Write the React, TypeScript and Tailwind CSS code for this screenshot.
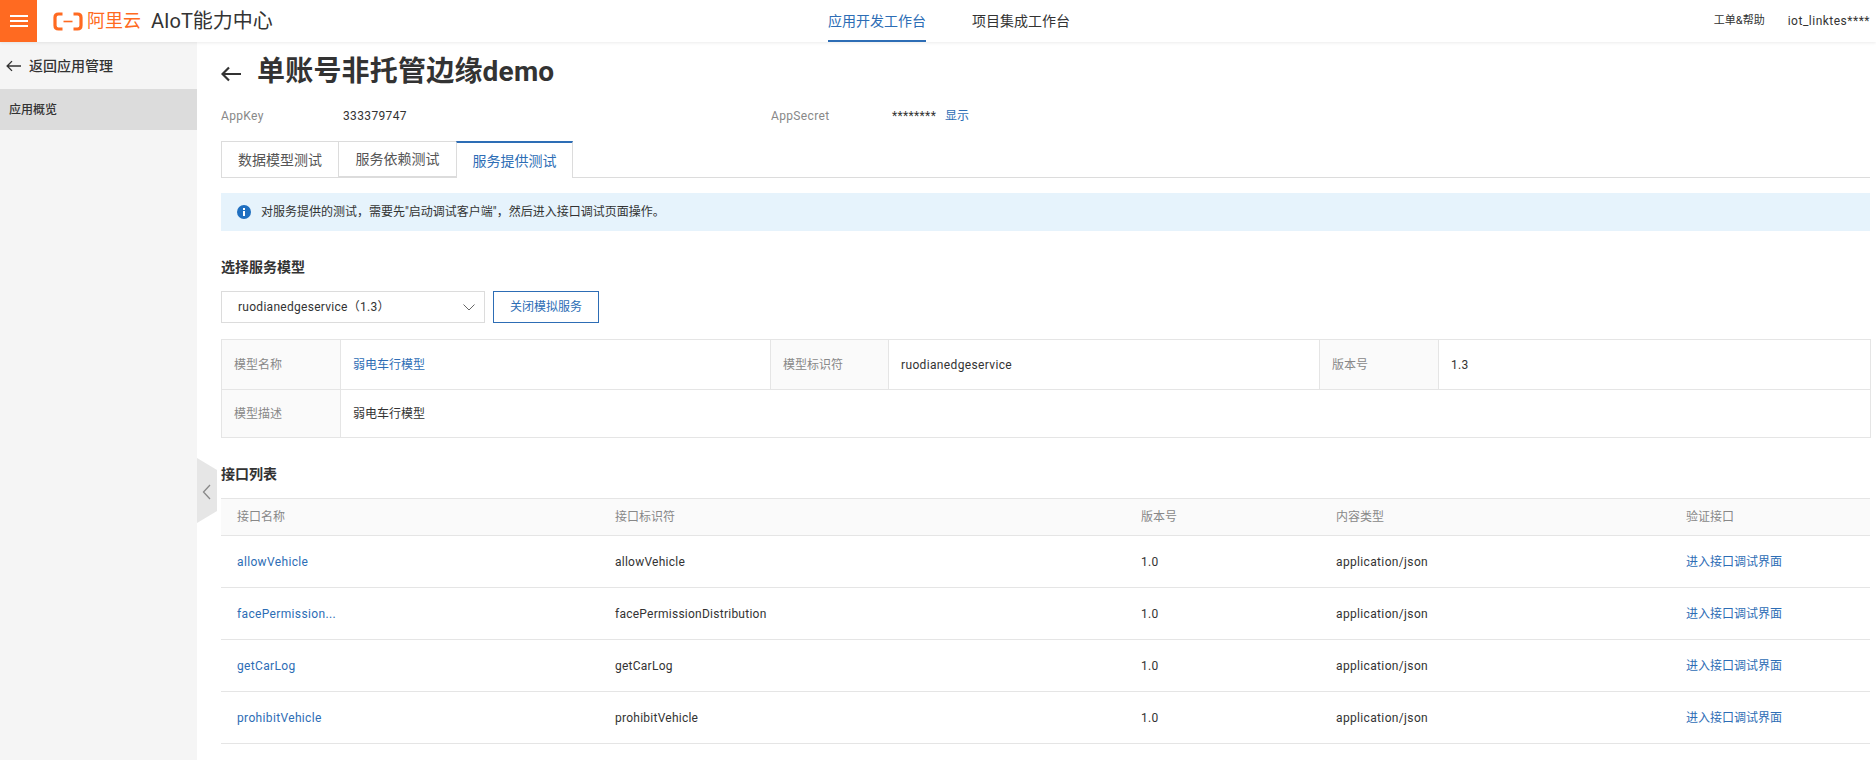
const blue = "text-[#2d6db5]";
const font = { fontFamily: '"Roboto","Noto Sans CJK SC",sans-serif' };

function Arrow({ w, h, sw }: { w: number; h: number; sw: number }) {
  return (
    <svg width={w} height={h} viewBox="0 0 20 16" fill="none" stroke="#333" strokeWidth={sw} className="block shrink-0">
      <path d="M20 8H1.5M8 1.5 1.5 8 8 14.5" />
    </svg>
  );
}

const cols = [378, 526, 195, 350, 200];
const rows = [
  ["allowVehicle", "allowVehicle"],
  ["facePermission...", "facePermissionDistribution"],
  ["getCarLog", "getCarLog"],
  ["prohibitVehicle", "prohibitVehicle"],
];

export default function App() {
  return (
    <div style={font} className="relative flex h-[760px] w-[1876px] flex-col overflow-hidden bg-white text-xs text-[#333] tracking-[0.35px]">
      <header className="relative z-10 flex h-[42px] shrink-0 items-stretch bg-white shadow-[0_1px_3px_rgba(0,0,0,0.08)]">
        <div className="flex w-[37px] flex-col items-center justify-center gap-[3px] bg-[#ff6a21]">
          <i className="h-[2px] w-[18px] bg-white" />
          <i className="h-[2px] w-[18px] bg-white" />
          <i className="h-[2px] w-[18px] bg-white" />
        </div>
        <div className="ml-[16px] flex w-[775px] items-center">
          <svg width="30" height="19" viewBox="0 0 30 19" fill="none" className="block shrink-0">
            <path d="M9.5 2H5.5Q2 2 2 5.5V13.5Q2 17 5.5 17H9.5M20.5 2H24.5Q28 2 28 5.5V13.5Q28 17 24.5 17H20.5" stroke="#ff6a21" strokeWidth="3.2" />
            <path d="M10.5 9.5H19.5" stroke="#ff6a21" strokeWidth="1.6" />
          </svg>
          <span className="ml-[4px] text-[18px] tracking-normal text-[#ff6a21]">阿里云</span>
          <span className="ml-[10px] text-[20px] tracking-normal text-[#333]">AIoT能力中心</span>
        </div>
        <nav className="flex text-sm tracking-normal">
          <div className="flex w-[98px] items-center justify-center border-b-[2px] border-[#2d6db5] pt-[2px] text-[#2d6db5]">应用开发工作台</div>
          <div className="ml-[46px] flex w-[98px] items-center justify-center text-[#333]">项目集成工作台</div>
        </nav>
        <div className="ml-auto mr-[6px] flex items-center gap-[23px]">
          <span className="text-[11px] tracking-normal">工单&帮助</span>
          <span className="tracking-[0.5px]">iot_linktes****</span>
        </div>
      </header>

      <div className="flex min-h-0 flex-1">
        <aside className="w-[197px] shrink-0 bg-[#f5f5f5]">
          <div className="flex h-[47px] items-center pl-[6px] text-sm font-medium tracking-normal">
            <Arrow w={15} h={12} sw={1.8} />
            <span className="ml-[8px]">返回应用管理</span>
          </div>
          <div className="flex h-[41px] items-center bg-[#dcdcdc] pl-[9px] pt-px font-medium tracking-normal">应用概览</div>
        </aside>

        <main className="min-w-0 flex-1 pl-[24px] pr-[6px]">
          <div className="flex h-[60px] items-center">
            <span className="mt-[3px]">
              <Arrow w={20} h={16} sw={2.2} />
            </span>
            <h1 className="ml-[16px] text-[28px] font-bold tracking-[0.2px]">单账号非托管边缘demo</h1>
          </div>
          <div className="flex h-[27px] items-center pt-px">
            <span className="w-[122px] text-[#888]">AppKey</span>
            <span className="w-[428px]">333379747</span>
            <span className="w-[121px] text-[#888]">AppSecret</span>
            <span className="w-[53px]">********</span>
            <span className={`tracking-normal ${blue}`}>显示</span>
          </div>
          <div className="mt-[12px] flex h-[37px] border-b border-[#dcdcdc] text-sm tracking-normal text-[#555]">
            <div className="flex w-[118px] items-center justify-center border border-b-0 border-[#dcdcdc]">数据模型测试</div>
            <div className="flex w-[117px] items-center justify-center border-y border-[#dcdcdc]">服务依赖测试</div>
            <div className="-mb-px flex w-[117px] items-center justify-center border-x border-t-2 border-[#dcdcdc] border-t-[#2d6db5] bg-white text-[#2d6db5]">服务提供测试</div>
          </div>
          <div className="mt-[15px] flex h-[38px] items-center bg-[#e6f3fc] pl-[16px] tracking-normal">
            <svg width="14" height="14" viewBox="0 0 14 14" className="block shrink-0">
              <circle cx="7" cy="7" r="7" fill="#1f6fc0" />
              <rect x="6" y="6" width="2" height="5" fill="#fff" />
              <rect x="6" y="3" width="2" height="2" fill="#fff" />
            </svg>
            <span className="ml-[10px]">对服务提供的测试，需要先"启动调试客户端"，然后进入接口调试页面操作。</span>
          </div>
          <h2 className="mt-[26px] text-sm font-semibold leading-[20px] tracking-normal">选择服务模型</h2>
          <div className="mt-[14px] flex gap-2">
            <div className="flex h-[32px] w-[264px] items-center justify-between border border-[#dcdcdc] pl-[16px] pr-[9px]">
              <span className="tracking-[0.28px]">ruodianedgeservice（1.3）</span>
              <svg width="12" height="7" viewBox="0 0 12 7" fill="none" stroke="#666" strokeWidth="1" className="block">
                <path d="M.5.5 6 6 11.5.5" />
              </svg>
            </div>
            <button className="h-[32px] w-[106px] border border-[#2d6db5] tracking-normal text-[#2d6db5]">关闭模拟服务</button>
          </div>
          <table className="mt-[16px] w-[1649px] table-fixed border-collapse">
            <colgroup>
              <col className="w-[119px]" />
              <col className="w-[430px]" />
              <col className="w-[118px]" />
              <col className="w-[431px]" />
              <col className="w-[119px]" />
              <col className="w-[432px]" />
            </colgroup>
            <tbody>
              <tr className="h-[50px]">
                <td className="border border-[#e5e5e5] bg-[#fafafa] pl-[12px] tracking-normal text-[#888]">模型名称</td>
                <td className={`border border-[#e5e5e5] pl-[12px] tracking-normal ${blue}`}>弱电车行模型</td>
                <td className="border border-[#e5e5e5] bg-[#fafafa] pl-[12px] tracking-normal text-[#888]">模型标识符</td>
                <td className="border border-[#e5e5e5] pl-[12px]">ruodianedgeservice</td>
                <td className="border border-[#e5e5e5] bg-[#fafafa] pl-[12px] tracking-normal text-[#888]">版本号</td>
                <td className="border border-[#e5e5e5] pl-[12px]">1.3</td>
              </tr>
              <tr className="h-[48px]">
                <td className="border border-[#e5e5e5] bg-[#fafafa] pl-[12px] tracking-normal text-[#888]">模型描述</td>
                <td colSpan={5} className="border border-[#e5e5e5] pl-[12px] tracking-normal">弱电车行模型</td>
              </tr>
            </tbody>
          </table>
          <h2 className="mt-[26px] text-sm font-semibold leading-[20px] tracking-normal">接口列表</h2>
          <table className="mt-[14px] w-[1649px] table-fixed border-collapse">
            <colgroup>
              {cols.map((w) => (
                <col key={w} style={{ width: w }} />
              ))}
            </colgroup>
            <thead>
              <tr className="h-[37px] border-y border-[#e5e5e5] bg-[#fafafa] tracking-normal text-[#888]">
                {["接口名称", "接口标识符", "版本号", "内容类型", "验证接口"].map((t) => (
                  <th key={t} className="pl-[16px] text-left font-normal">{t}</th>
                ))}
              </tr>
            </thead>
            <tbody>
              {rows.map(([a, b]) => (
                <tr key={b} className="h-[52px] border-b border-[#e5e5e5]">
                  <td className={`py-0 pl-[16px] ${blue}`}>{a}</td>
                  <td className="py-0 pl-[16px] tracking-[0.25px]">{b}</td>
                  <td className="py-0 pl-[16px]">1.0</td>
                  <td className="py-0 pl-[16px]">application/json</td>
                  <td className={`py-0 pl-[16px] tracking-normal ${blue}`}>进入接口调试界面</td>
                </tr>
              ))}
            </tbody>
          </table>
        </main>
      </div>

      <svg width="20" height="65" viewBox="0 0 20 65" className="absolute left-[197px] top-[458px] block">
        <path d="M0 0 20 12V53L0 65Z" fill="#e6e6e6" />
        <path d="M13 27 6.5 34 13 41" fill="none" stroke="#888" strokeWidth="1.3" />
      </svg>
    </div>
  );
}
